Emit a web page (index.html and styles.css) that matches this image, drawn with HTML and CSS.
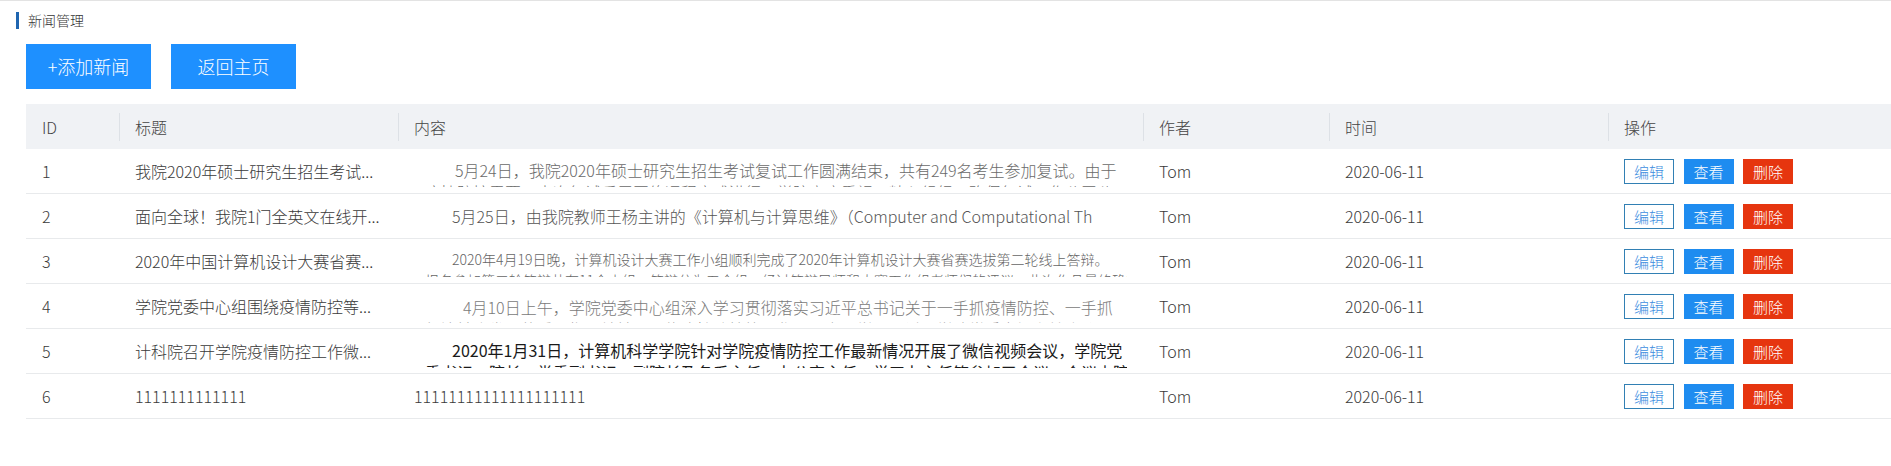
FILE: index.html
```html
<!DOCTYPE html>
<html lang="zh-CN">
<head>
<meta charset="utf-8">
<title>新闻管理</title>
<link rel="stylesheet" href="styles.css">
</head>
<body>
<div class="page">
  <div class="crumb">新闻管理</div>
  <div class="main">
    <div class="actions">
      <button class="btn-primary">+添加新闻</button>
      <button class="btn-primary">返回主页</button>
    </div>
    <div class="table">
      <div class="tr th">
        <div class="cell">ID</div>
        <div class="cell">标题</div>
        <div class="cell">内容</div>
        <div class="cell">作者</div>
        <div class="cell">时间</div>
        <div class="cell">操作</div>
      </div>

      <div class="tr">
        <div class="cell">1</div>
        <div class="cell">我院2020年硕士研究生招生考试...</div>
        <div class="cell content">
          <div class="rich r1">
            <div class="ln">5月24日，我院2020年硕士研究生招生考试复试工作圆满结束，共有249名考生参加复试。由于</div>
            <div class="ln">疫情防控需要，本次复试采用网络远程方式进行，学院高度重视，精心组织，确保复试工作公平公正。</div>
          </div>
        </div>
        <div class="cell">Tom</div>
        <div class="cell">2020-06-11</div>
        <div class="cell ops"><button class="op op-edit">编辑</button><button class="op op-view">查看</button><button class="op op-del">删除</button></div>
      </div>

      <div class="tr">
        <div class="cell">2</div>
        <div class="cell">面向全球！我院1门全英文在线开...</div>
        <div class="cell content">
          <div class="rich r2">
            <div class="ln">5月25日，由我院教师王杨主讲的《计算机与计算思维》（Computer and Computational Th</div>
          </div>
        </div>
        <div class="cell">Tom</div>
        <div class="cell">2020-06-11</div>
        <div class="cell ops"><button class="op op-edit">编辑</button><button class="op op-view">查看</button><button class="op op-del">删除</button></div>
      </div>

      <div class="tr">
        <div class="cell">3</div>
        <div class="cell">2020年中国计算机设计大赛省赛...</div>
        <div class="cell content">
          <div class="rich r3">
            <div class="ln">2020年4月19日晚，计算机设计大赛工作小组顺利完成了2020年计算机设计大赛省赛选拔第二轮线上答辩。</div>
            <div class="ln">报名参加第二轮答辩共有11个小组，答辩分为五个组，经过答辩导师和大赛工作组老师们的评议，此次作品最终确定</div>
          </div>
        </div>
        <div class="cell">Tom</div>
        <div class="cell">2020-06-11</div>
        <div class="cell ops"><button class="op op-edit">编辑</button><button class="op op-view">查看</button><button class="op op-del">删除</button></div>
      </div>

      <div class="tr">
        <div class="cell">4</div>
        <div class="cell">学院党委中心组围绕疫情防控等...</div>
        <div class="cell content">
          <div class="rich r4">
            <div class="ln">4月10日上午，学院党委中心组深入学习贯彻落实习近平总书记关于一手抓疫情防控、一手抓</div>
            <div class="ln">经济社会发展的重要指示精神，围绕疫情防控等工作开展专题学习研讨，学院党委书记主持会议。</div>
          </div>
        </div>
        <div class="cell">Tom</div>
        <div class="cell">2020-06-11</div>
        <div class="cell ops"><button class="op op-edit">编辑</button><button class="op op-view">查看</button><button class="op op-del">删除</button></div>
      </div>

      <div class="tr">
        <div class="cell">5</div>
        <div class="cell">计科院召开学院疫情防控工作微...</div>
        <div class="cell content">
          <div class="rich r5">
            <div class="ln">2020年1月31日，计算机科学学院针对学院疫情防控工作最新情况开展了微信视频会议，学院党</div>
            <div class="ln">委书记、院长、党委副书记、副院长及各系主任、办公室主任、学工办主任等参加了会议，会议由院长主持。</div>
          </div>
        </div>
        <div class="cell">Tom</div>
        <div class="cell">2020-06-11</div>
        <div class="cell ops"><button class="op op-edit">编辑</button><button class="op op-view">查看</button><button class="op op-del">删除</button></div>
      </div>

      <div class="tr">
        <div class="cell">6</div>
        <div class="cell">1111111111111</div>
        <div class="cell">11111111111111111111</div>
        <div class="cell">Tom</div>
        <div class="cell">2020-06-11</div>
        <div class="cell ops"><button class="op op-edit">编辑</button><button class="op op-view">查看</button><button class="op op-del">删除</button></div>
      </div>
    </div>
  </div>
</div>
</body>
</html>
```

FILE: styles.css
```css
html, body {
  margin: 0;
  padding: 0;
  background: #ffffff;
}

body {
  border-top: 1px solid #e3e3e3;
  font-family: "Noto Sans CJK SC", "Microsoft YaHei", "Liberation Sans", sans-serif;
  font-weight: 300;
  color: #333333;
}

.page {
  padding-left: 16px;
}

.crumb {
  margin-top: 11px;
  height: 17px;
  line-height: 17px;
  border-left: 3px solid #1f65b0;
  padding-left: 9px;
  font-size: 14px;
  color: #333333;
}

.main {
  padding-left: 10px;
}

.actions {
  display: flex;
  gap: 20px;
  margin-top: 15px;
}

.btn-primary {
  width: 125px;
  height: 45px;
  border: 0;
  padding: 0;
  background: #1e90ff;
  color: #ffffff;
  font-family: inherit;
  font-weight: 300;
  font-size: 18px;
  line-height: 45px;
  border-radius: 0;
}

.table {
  margin-top: 15px;
}

.tr {
  display: grid;
  grid-template-columns: 93px 279px 745px 186px 279px 1fr;
  height: 45px;
  box-sizing: border-box;
  border-bottom: 1px solid #e8eaec;
}

.th {
  background: #f0f2f5;
  border-bottom: 0;
}

.th .cell {
  color: #444444;
}

.th .cell + .cell {
  background: linear-gradient(#dde1e6, #dde1e6) no-repeat left center / 1px 28px;
}

.cell {
  min-width: 0;
  padding: 0 16px;
  display: flex;
  align-items: center;
  font-size: 16px;
  white-space: nowrap;
  overflow: hidden;
  color: #3a3a3a;
}

.cell.content {
  align-items: flex-start;
}

.rich {
  box-sizing: border-box;
  width: 100%;
  padding-left: 11px;
  overflow: hidden;
}

.rich .ln {
  white-space: nowrap;
  overflow: hidden;
  line-height: 22px;
}

.r1 {
  margin-top: 10px;
  height: 28px;
  color: #6a6a6a;
  font-size: 16px;
}
.r1 .ln:first-child { text-indent: 30px; }

.r2 {
  margin-top: 11px;
  height: 22px;
  color: #555555;
  font-size: 16px;
}
.r2 .ln:first-child { text-indent: 27px; }

.r3 {
  margin-top: 10px;
  height: 28px;
  color: #666666;
  font-size: 14px;
}
.r3 .ln { line-height: 21px; }
.r3 .ln:first-child { text-indent: 27px; }

.r4 {
  margin-top: 12px;
  height: 27px;
  color: #7a7a7a;
  font-size: 16px;
}
.r4 .ln:first-child { text-indent: 38px; }

.r5 {
  margin-top: 10px;
  height: 29px;
  color: #1a1a1a;
  font-size: 16px;
  font-weight: 400;
}
.r5 .ln:first-child { text-indent: 27px; }

.ops {
  gap: 9.5px;
}

.op {
  box-sizing: border-box;
  width: 50px;
  height: 25px;
  padding: 0;
  border: 1px solid;
  border-radius: 0;
  font-family: inherit;
  font-weight: 300;
  font-size: 15px;
  line-height: 23px;
  text-align: center;
}

.op-edit {
  background: #ffffff;
  color: #3d8ee0;
  border-color: #3280b4;
}

.op-view {
  background: #1e8cf0;
  color: #ffffff;
  border-color: #1e8cf0;
}

.op-del {
  background: #e6350f;
  color: #ffffff;
  border-color: #e6350f;
}
```
